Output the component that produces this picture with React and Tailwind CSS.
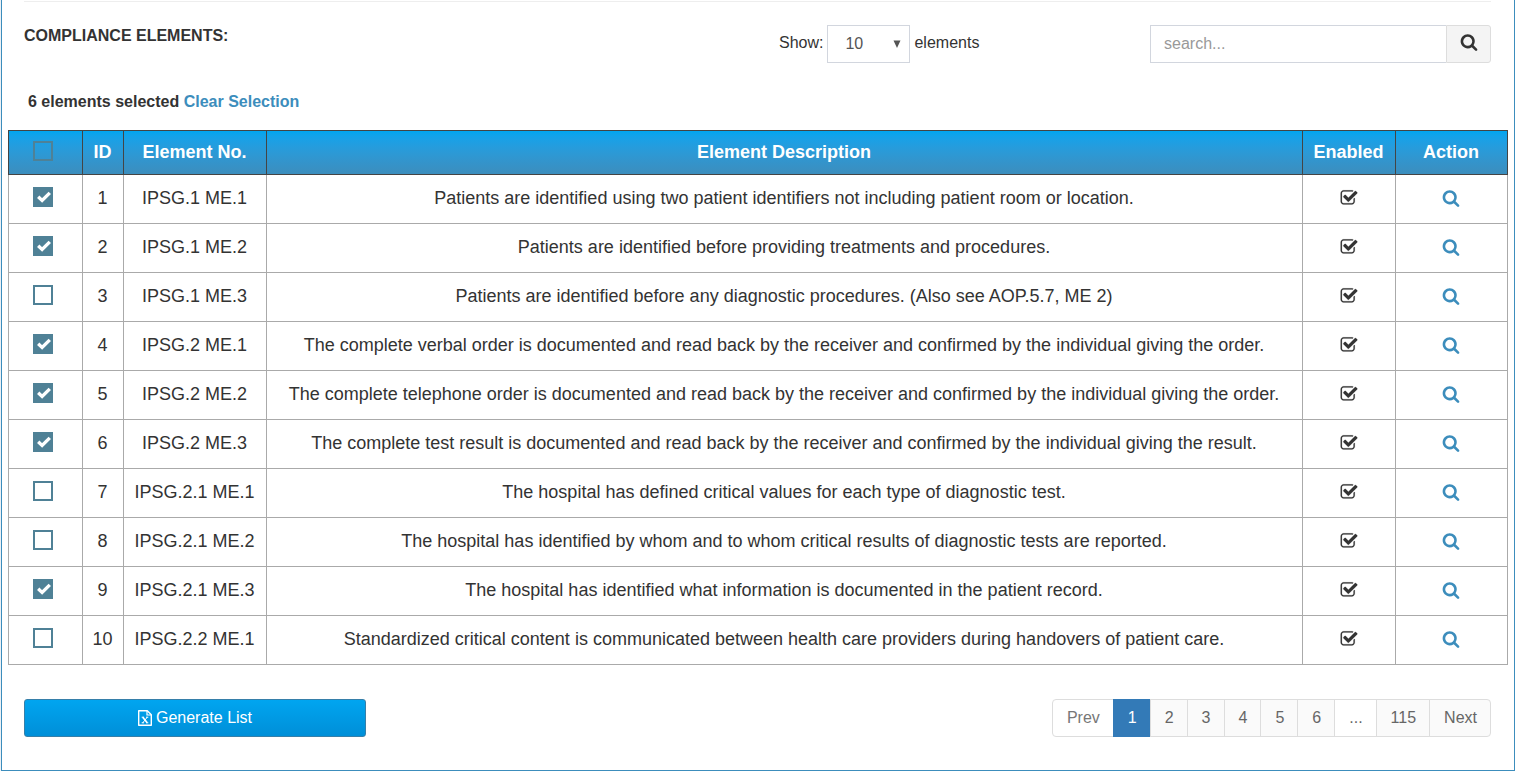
import { useState } from "react";

const ROWS = [
  [1, "IPSG.1 ME.1", "Patients are identified using two patient identifiers not including patient room or location.", true],
  [2, "IPSG.1 ME.2", "Patients are identified before providing treatments and procedures.", true],
  [3, "IPSG.1 ME.3", "Patients are identified before any diagnostic procedures. (Also see AOP.5.7, ME 2)", false],
  [4, "IPSG.2 ME.1", "The complete verbal order is documented and read back by the receiver and confirmed by the individual giving the order.", true],
  [5, "IPSG.2 ME.2", "The complete telephone order is documented and read back by the receiver and confirmed by the individual giving the order.", true],
  [6, "IPSG.2 ME.3", "The complete test result is documented and read back by the receiver and confirmed by the individual giving the result.", true],
  [7, "IPSG.2.1 ME.1", "The hospital has defined critical values for each type of diagnostic test.", false],
  [8, "IPSG.2.1 ME.2", "The hospital has identified by whom and to whom critical results of diagnostic tests are reported.", false],
  [9, "IPSG.2.1 ME.3", "The hospital has identified what information is documented in the patient record.", true],
  [10, "IPSG.2.2 ME.1", "Standardized critical content is communicated between health care providers during handovers of patient care.", false],
];

function SearchIcon({ className }) {
  return (
    <svg viewBox="0 0 1792 1792" fill="currentColor" aria-hidden="true" className={className}>
      <path d="M1216 832q0-185-131.5-316.5t-316.5-131.5-316.5 131.5-131.5 316.5 131.5 316.5 316.5 131.5 316.5-131.5 131.5-316.5zm512 832q0 52-38 90t-90 38q-54 0-90-38l-343-342q-179 124-399 124-143 0-273.5-55.5t-225-150-150-225-55.5-273.5 55.5-273.5 150-225 225-150 273.5-55.5 273.5 55.5 225 150 150 225 55.5 273.5q0 220-124 399l343 343q37 37 37 90z" />
    </svg>
  );
}

function EnabledIcon() {
  return (
    <svg viewBox="0 0 1792 1792" fill="currentColor" stroke="currentColor" strokeWidth="16" role="img" aria-label="Enabled" className="mx-auto block size-[18px]">
      <path d="M1472 930v318q0 119-84.5 203.5t-203.5 84.5h-832q-119 0-203.5-84.5t-84.5-203.5v-832q0-119 84.5-203.5t203.5-84.5h832q63 0 117 25 15 7 18 23 3 17-9 29l-49 49q-10 10-23 10-3 0-9-2-23-6-45-6h-832q-66 0-113 47t-47 113v832q0 66 47 113t113 47h832q66 0 113-47t47-113v-254q0-13 9-22l64-64q10-10 23-10 6 0 12 3 20 8 20 29zm231-489l-814 814q-24 24-57 24t-57-24l-430-430q-24-24-24-57t24-57l110-110q24-24 57-24t57 24l263 263 647-647q24-24 57-24t57 24l110 110q24 24 24 57t-24 57z" />
    </svg>
  );
}

function ExcelIcon() {
  return (
    <svg viewBox="0 0 14 16" fill="none" stroke="currentColor" aria-hidden="true" className="h-4 w-[14px]">
      <path d="M0.7 0.7H9.3L13.3 4.7V15.3H0.7Z" strokeWidth="1.4" strokeLinejoin="round" />
      <path d="M9 0.7V5H13.3" strokeWidth="1.2" />
      <path d="M4.8 7.2L9.2 12.8" strokeWidth="1.7" />
      <path d="M9.2 7.2L4.8 12.8M3.7 7.2H6.1M8 7.2H10.3M3.7 12.8H6.1M8 12.8H10.3" strokeWidth="1" />
    </svg>
  );
}

function Tick({ label, checked, onChange }) {
  return (
    <span className="mx-auto grid w-5">
      <input
        type="checkbox"
        aria-label={label}
        checked={checked}
        onChange={onChange}
        className="peer col-start-1 row-start-1 size-5 appearance-none border-2 border-[#4f8196] checked:bg-[#4f8196]"
      />
      <svg viewBox="0 0 20 20" aria-hidden="true" className="pointer-events-none invisible col-start-1 row-start-1 size-5 peer-checked:visible">
        <path d="M5.2 9.8L9.1 13.4L16.8 5.9" fill="none" stroke="#fff" strokeWidth="3.4" />
      </svg>
    </span>
  );
}

const PAGES = ["Prev", "1", "2", "3", "4", "5", "6", "...", "115", "Next"];

function pageStyle(page) {
  if (page === "1") return "border-[#337ab7] bg-[#337ab7] text-white";
  if (page === "Prev") return "border-[#ddd] bg-white text-[#777]";
  if (page === "...") return "border-[#ddd] bg-white text-[#666]";
  return "border-[#ddd] bg-[#fafafa] text-[#666]";
}

export default function App() {
  const [picked, setPicked] = useState(ROWS.filter((r) => r[3]).map((r) => r[0]));
  const toggle = (id) => setPicked((p) => (p.includes(id) ? p.filter((x) => x !== id) : [...p, id]));
  const all = picked.length === ROWS.length;

  return (
    <div className="bg-[#ecf0f5] pl-px">
      <main className="border-x border-b border-[#3c8dbc] bg-white px-1.5 pt-px pb-[33px] font-['Liberation_Sans',Arial,sans-serif] text-base leading-[22px] text-[#333]">
        <hr className="mr-[17px] ml-4 border-t border-[#eee]" />

        <div className="flex items-start pt-[23px] pr-[17px] pl-4">
          <h2 className="w-[755px] shrink font-bold">COMPLIANCE ELEMENTS:</h2>
          <div className="flex h-[38px] shrink-0 items-center gap-1">
            <label htmlFor="page-size" className="-mt-0.5">Show:</label>
            <span className="grid items-center">
              <select
                id="page-size"
                defaultValue="10"
                className="col-start-1 row-start-1 h-[38px] w-[83px] appearance-none border border-[#d2d6de] bg-white pl-[17px] text-[#555]"
              >
                <option>10</option>
                <option>25</option>
                <option>50</option>
              </select>
              <svg viewBox="0 0 8 8" aria-hidden="true" className="pointer-events-none col-start-1 row-start-1 mr-[9px] size-2 justify-self-end">
                <path d="M0.5 0.5H7.5L4 8Z" fill="#555" />
              </svg>
            </span>
            <span className="-mt-0.5">elements</span>
          </div>
          <form className="ml-auto flex h-[38px] w-[341px]" onSubmit={(e) => e.preventDefault()}>
            <input
              type="text"
              aria-label="Search elements"
              placeholder="search..."
              className="min-w-0 flex-1 border border-r-0 border-[#d2d6de] px-[13px] placeholder:text-[#999]"
            />
            <button type="submit" aria-label="Search" className="flex w-[45px] items-center justify-center rounded-r-[3px] border border-[#ddd] bg-[#f4f4f4] pb-1 text-[#333]">
              <SearchIcon className="size-[18px]" />
            </button>
          </form>
        </div>

        <p className="mt-7 mb-[17px] px-5 font-bold">
          {picked.length} elements selected{" "}
          <button type="button" onClick={() => setPicked([])} className="text-[#3c8dbc]">
            Clear Selection
          </button>
        </p>

        <table className="w-full table-fixed border-collapse text-center text-lg leading-[26px]">
          <colgroup>
            <col className="w-[74px]" />
            <col className="w-[41px]" />
            <col className="w-[143px]" />
            <col />
            <col className="w-[93px]" />
            <col className="w-[112px]" />
          </colgroup>
          <thead>
            <tr className="h-11 bg-linear-to-b from-[#00a5f0] to-[#3c8dbc] text-white *:border *:border-[#444] *:pt-0 *:pr-px *:pb-0.5 *:pl-0 *:first:pr-[5px] *:first:pb-1">
              <th scope="col">
                <Tick label="Select all" checked={all} onChange={() => setPicked(all ? [] : ROWS.map((r) => r[0]))} />
              </th>
              <th scope="col">ID</th>
              <th scope="col">Element No.</th>
              <th scope="col">Element Description</th>
              <th scope="col">Enabled</th>
              <th scope="col">Action</th>
            </tr>
          </thead>
          <tbody>
            {ROWS.map(([id, no, text]) => (
              <tr key={id} className="h-[49px] *:border *:border-[#aaa] *:pt-0 *:pr-px *:pb-[3px] *:pl-0 *:first:pr-[5px] *:first:pb-1">
                <td>
                  <Tick label={`Select ${no}`} checked={picked.includes(id)} onChange={() => toggle(id)} />
                </td>
                <td>{id}</td>
                <td>{no}</td>
                <td>{text}</td>
                <td><EnabledIcon /></td>
                <td>
                  <button type="button" aria-label={`View ${no}`} className="mx-auto block text-[#3c8dbc]">
                    <SearchIcon className="size-[18px]" />
                  </button>
                </td>
              </tr>
            ))}
          </tbody>
        </table>

        <div className="mt-[34px] flex items-start justify-between pr-[17px] pl-4">
          <button type="button" className="flex h-[38px] w-[342px] items-center justify-center gap-1 rounded-[3px] border border-[#367fa9] bg-linear-to-b from-[#00a5f0] to-[#008fd8] text-white">
            <ExcelIcon />
            Generate List
          </button>
          <nav aria-label="Pages">
            <ul className="flex">
              {PAGES.map((page) => (
                <li key={page} className="group -ml-px first:ml-0">
                  <a
                    href="#"
                    aria-current={page === "1" ? "page" : undefined}
                    className={`block h-[38px] border pr-[13px] pl-[14px] leading-9 group-first:rounded-l group-last:rounded-r ${pageStyle(page)}`}
                  >
                    {page}
                  </a>
                </li>
              ))}
            </ul>
          </nav>
        </div>
      </main>
    </div>
  );
}
